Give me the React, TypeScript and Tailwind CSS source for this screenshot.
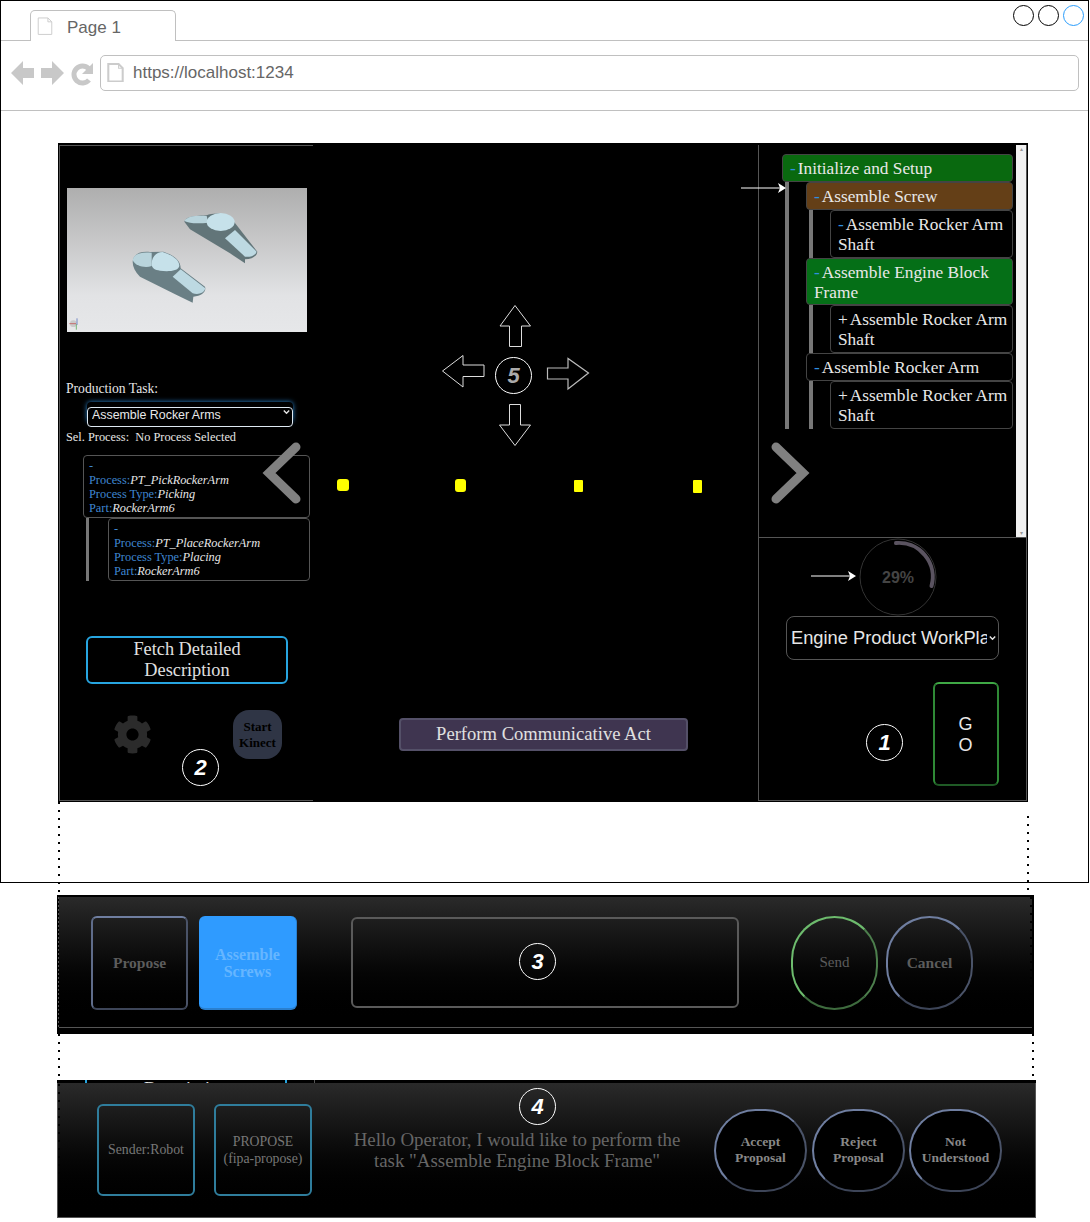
import { FaCog } from "react-icons/fa";

type TreeItem = {
  sign: string;
  label: string;
  bg?: string;
  kids?: TreeItem[];
};

const tree: TreeItem = {
  sign: "-",
  label: "Initialize and Setup",
  bg: "bg-[#09690f]",
  kids: [
    {
      sign: "-",
      label: "Assemble Screw",
      bg: "bg-[#643f17]",
      kids: [{ sign: "-", label: "Assemble Rocker Arm Shaft" }],
    },
    {
      sign: "-",
      label: "Assemble Engine Block Frame",
      bg: "bg-[#056f17]",
      kids: [{ sign: "+", label: "Assemble Rocker Arm Shaft" }],
    },
    {
      sign: "-",
      label: "Assemble Rocker Arm",
      kids: [{ sign: "+", label: "Assemble Rocker Arm Shaft" }],
    },
  ],
};

function TreeNode({ item }: { item: TreeItem }) {
  return (
    <div>
      <div
        className={`rounded-[4px] border border-[#444] pb-[2px] pl-[7px] pr-[2px] pt-[4px] text-[17.3px] leading-[19.9px] text-[#e8e8e8] ${item.bg ?? "bg-black"}`}
      >
        <span className={item.sign === "-" ? "mr-[2px] text-[#2f8fe0]" : "mr-[2px] text-[#e8e8e8]"}>{item.sign}</span>
        {item.label}
      </div>
      {item.kids && (
        <div className="ml-[3px] border-l-[4px] border-[#777] pl-[17px]">
          {item.kids.map((kid) => (
            <TreeNode key={kid.label + kid.sign} item={kid} />
          ))}
        </div>
      )}
    </div>
  );
}

function ProcessCard({ name, type }: { name: string; type: string }) {
  return (
    <div className="h-[63px] rounded-[4px] border border-[#555] pl-[5px] pt-[3px] text-[12.35px] leading-[14px] text-[#3f86d0]">
      <div>-</div>
      <div>
        Process:<i className="text-[#e6e6e6]">{name}</i>
      </div>
      <div>
        Process Type:<i className="text-[#e6e6e6]">{type}</i>
      </div>
      <div>
        Part:<i className="text-[#e6e6e6]">RockerArm6</i>
      </div>
    </div>
  );
}

function Marker({ n, pos, dim }: { n: string; pos: string; dim?: boolean }) {
  return (
    <div
      className={`absolute flex h-[37px] w-[37px] items-center justify-center rounded-full border border-white font-['Liberation_Sans',sans-serif] text-[22px] font-bold italic ${dim ? "text-[#aaa]" : "text-white"} ${pos}`}
    >
      {n}
    </div>
  );
}

function DocIcon({ stroke, width }: { stroke: number; width: number }) {
  return (
    <svg width={width} height={width * 1.15} viewBox="0 0 16 19" fill="none" stroke="#ccc" strokeWidth={stroke}>
      <path d="M1 1h10l4 4v13H1z" />
      <path d="M11 1v4h4" strokeWidth="1" />
    </svg>
  );
}

function Dots({ pos, tint }: { pos: string; tint: string }) {
  return <div className={`absolute w-[2px] ${tint} ${pos}`} />;
}

function PanelButton({ label, cls }: { label: string; cls: string }) {
  return <div className={`flex items-center justify-center text-center ${cls}`}>{label}</div>;
}

function Chevron() {
  return (
    <svg
      className="pointer-events-none absolute right-[3px] top-1/2 -translate-y-1/2"
      width="7"
      height="5"
      viewBox="0 0 7 5"
      fill="none"
      stroke="#e6e6e6"
      strokeWidth="1.4"
    >
      <path d="M0.8 1 3.5 3.8 6.2 1" />
    </svg>
  );
}

function PartPreview() {
  return (
    <svg width="240" height="144" viewBox="51 144 720 432" className="block">
      <defs>
        <linearGradient id="sky" x1="0" y1="0" x2="0" y2="1">
          <stop offset="0" stopColor="#aeaeae" />
          <stop offset="0.75" stopColor="#e2e3e5" />
          <stop offset="1" stopColor="#e6e7e9" />
        </linearGradient>
      </defs>
      <rect x="51" y="144" width="720" height="432" fill="url(#sky)" />
      <path d="M403 245C410 232 420 228 470 226 490 218 530 215 552 245L622 335C620 350 605 358 585 358L585 370 540 340 420 268Z" fill="#627579" />
      <path d="M403 243C412 228 440 226 470 228L475 248C450 250 420 252 403 243Z" fill="#b9d4dc" />
      <ellipse cx="512" cy="246" rx="42" ry="27" fill="#c6e1ea" />
      <path d="M525 295 555 270 620 335C615 348 600 352 585 350Z" fill="#bdd9e2" />
      <path d="M248 365C250 345 265 333 300 336L340 335C370 345 392 360 392 385L465 440C470 455 455 468 430 470L428 488 380 465 270 410C255 395 248 380 248 365Z" fill="#6a7f85" />
      <path d="M248 360C252 342 270 335 305 338L305 378C285 385 255 378 248 360Z" fill="#b9d4dc" />
      <path d="M305 372C305 350 320 336 338 336 365 345 388 358 388 378 385 395 350 395 330 392 315 390 305 385 305 372Z" fill="#c6e1ea" />
      <path d="M368 410 392 388 466 445C462 460 445 465 428 460Z" fill="#bdd9e2" />
      <circle cx="70" cy="551" r="10" fill="#c9c9c9" />
      <path d="M81 535v20" stroke="#3b5bb5" strokeWidth="2" />
      <path d="M58 551h20" stroke="#c04040" strokeWidth="2" />
      <path d="M79 553v16" stroke="#40a040" strokeWidth="2" />
    </svg>
  );
}

function MoveArrows() {
  return (
    <svg width="148" height="142" viewBox="442 305 148 142" fill="none" stroke="#ddd" strokeWidth="1" className="block">
      <path d="M515 305.5 530.5 326H521.5V346.5H509.5V326H500Z" />
      <path d="M442.5 371 463 355.5V365H484V376.5H463V387Z" />
      <path d="M588.5 373 568 358.5V368H547.5V379H568V389Z" strokeWidth="1.2" stroke="#bbb" />
      <path d="M515 445.5 530.5 425H520.5V404.5H509.5V425H499.5Z" />
    </svg>
  );
}

const roundBtn =
  "h-[83px] w-[93px] rounded-full border-[2px] border-b-[#3d4558] border-l-[#6f7ea0] border-r-[#4a5368] border-t-[#6f7ea0] bg-black px-[6px] text-[13.5px] font-bold leading-[16px] text-[#888]";

const blackDots = "bg-[repeating-linear-gradient(to_bottom,#000_0_2px,transparent_2px_8px)]";

export default function App() {
  return (
    <div className="relative h-[1222px] w-[1090px] overflow-hidden bg-white font-['Liberation_Serif',serif]">
      {/* browser frame */}
      <div className="h-[883px] w-[1089px] border border-black">
        <div className="flex h-[40px] items-end border-b border-[#c0c0c0] pl-[29px]">
          <div className="-mb-px flex h-[31px] w-[146px] items-center rounded-t-[5px] border border-b-0 border-[#c0c0c0] bg-white pl-[6px] font-['Liberation_Sans',sans-serif] text-[17px] text-[#666]">
            <DocIcon stroke={1} width={16} />
            <span className="ml-[14px] mt-[4px]">Page 1</span>
          </div>
        </div>
        <div className="flex h-[70px] items-center border-b border-[#c0c0c0] pb-[6px] pl-[10px]">
          <svg width="84" height="26" viewBox="0 0 84 26" fill="#c8c8c8">
            <path d="M0 13 12 1V8H23V18H12V25Z" />
            <path d="M53 13 41 1V8H30V18H41V25Z" />
            <path d="M77.5 8.5A8.5 8.5 0 1 0 78 20" fill="none" stroke="#c8c8c8" strokeWidth="5" />
            <path d="M82 3V14H71Z" />
          </svg>
          <div className="ml-[5px] flex h-[36px] w-[979px] items-center rounded-[5px] border border-[#c0c0c0] pl-[6px] font-['Liberation_Sans',sans-serif] text-[17px] text-[#666]">
            <DocIcon stroke={2} width={17} />
            <span className="ml-[9px]">https://localhost:1234</span>
          </div>
        </div>
        <div className="pl-[57px] pt-[32px]">
          <div className="flex h-[659px] w-[970px] bg-black pb-px pl-px pt-[2px] text-[#e6e6e6]">
            {/* left column */}
            <div className="flex w-[254px] flex-col border-y border-l border-[#555]">
              <div className="ml-[7px] mt-[42px]">
                <PartPreview />
              </div>
              <div className="ml-[6px] mt-[49px] text-[13.6px] leading-[15px]">Production Task:</div>
              <div className="relative ml-[27px] mt-[6px] h-[20px] w-[206px] rounded-[4px] shadow-[0_0_5px_#2a86d0]">
                <select className="h-full w-full appearance-none rounded-[4px] border border-[#dfe9f2] bg-black pb-[4px] pl-[4px] pt-0 font-['Liberation_Sans',sans-serif] text-[12.4px] leading-[14px] text-[#e8e8e8]">
                  <option>Assemble Rocker Arms</option>
                </select>
                <Chevron />
              </div>
              <div className="ml-[6px] mt-[8px] whitespace-pre text-[12.35px] leading-[14px]">Sel. Process:  No Process Selected</div>
              <div className="ml-[23px] mt-[11px] w-[227px]">
                <ProcessCard name="PT_PickRockerArm" type="Picking" />
                <div className="ml-[3px] border-l-[3px] border-[#777] pl-[19px]">
                  <ProcessCard name="PT_PlaceRockerArm" type="Placing" />
                </div>
              </div>
              <button className="ml-[26px] mt-[55px] h-[48px] w-[202px] rounded-[6px] border-2 border-[#27a5e0] px-[30px] text-[18.3px] leading-[21px] text-[#e0e0e0]">
                Fetch Detailed Description
              </button>
              <div className="ml-[53px] mt-[26px] flex items-center gap-[81px]">
                <FaCog size={39} color="#2b2b2b" />
                <div className="flex h-[49px] w-[49px] items-center justify-center rounded-[16px] bg-[#2f3545] text-center text-[13px] font-bold leading-[16px] text-black">
                  Start Kinect
                </div>
              </div>
            </div>

            {/* centre column */}
            <div className="flex w-[445px] flex-col">
              <div className="ml-[129px] mt-[160px]">
                <MoveArrows />
              </div>
              <div className="ml-[24px] mt-[32px] flex items-start">
                <div className="h-[12px] w-[12px] rounded-[3px] bg-[#ffff00]" />
                <div className="ml-[106px] h-[13px] w-[11px] rounded-[3px] bg-[#ffff00]" />
                <div className="ml-[108px] mt-px h-[12px] w-[9px] rounded-[1px] bg-[#ffff00]" />
                <div className="ml-[110px] mt-px h-[13px] w-[9px] rounded-[1px] bg-[#ffff00]" />
              </div>
              <button className="ml-[86px] mt-[225px] h-[33px] w-[289px] rounded-[4px] border-2 border-[#545068] bg-[#3f3550] pb-[2px] text-[18.6px] text-[#e0e0e0]">
                Perform Communicative Act
              </button>
            </div>

            {/* right column */}
            <div className="flex w-[269px] flex-col border-b border-l border-r border-[#555]">
              <div className="flex h-[392px]">
                <div className="flex-1 pl-[23px] pr-[3px] pt-[9px]">
                  <TreeNode item={tree} />
                </div>
                <div className="flex w-[10px] flex-col justify-between bg-[#f1f1f1] text-center text-[6px] leading-[8px] text-[#999]">
                  <span>▴</span>
                  <span>▾</span>
                </div>
              </div>
              <div className="flex flex-1 flex-col border-t border-[#555]">
                <div className="relative ml-[100px] h-[78px] w-[78px]">
                  <svg width="78" height="78" viewBox="0 0 78 78" fill="none" className="block">
                    <circle cx="39" cy="39" r="38" stroke="#333" strokeWidth="1" />
                    <path d="M37 5A34 34 0 0 1 72.5 48" stroke="#5a5360" strokeWidth="4" strokeLinecap="round" />
                  </svg>
                  <span className="absolute inset-0 flex items-center justify-center pt-[1px] font-['Liberation_Sans',sans-serif] text-[16px] font-bold text-[#444]">
                    29%
                  </span>
                </div>
                <div className="relative ml-[27px] h-[44px] w-[213px]">
                  <select className="h-full w-full appearance-none rounded-[8px] border border-[#555] bg-black pl-[4px] pr-[11px] font-['Liberation_Sans',sans-serif] text-[18.3px] text-[#e6e6e6]">
                    <option>Engine Product WorkPlan</option>
                  </select>
                  <Chevron />
                </div>
                <div className="ml-[174px] mt-[22px] flex h-[104px] w-[66px] items-center justify-center rounded-[6px] border-2 border-b-[#1f5a25] border-l-[#2f8a36] border-r-[#2f8a36] border-t-[#3fa845] pr-px pt-[2px] font-['Liberation_Sans',sans-serif] text-[18px] leading-[21px] text-[#e8e8e8]">
                  <span className="w-[15px] break-all text-center">GO</span>
                </div>
              </div>
            </div>
          </div>
        </div>
      </div>

      {/* message composer */}
      <div className="ml-[57px] mt-[12px] flex h-[139px] w-[977px] flex-col border-x-2 border-t-2 border-black bg-black">
        <div className="flex h-[131px] items-center border-b border-[#555] bg-gradient-to-b from-[#2a2a2a] to-black pl-[32px] pt-px">
          <PanelButton
            label="Propose"
            cls="h-[94px] w-[97px] rounded-[6px] border-2 border-b-[#3d4558] border-l-[#5f6c8a] border-r-[#4a5368] border-t-[#6f7ea0] text-[15.5px] font-bold text-[#5c5c5c]"
          />
          <PanelButton
            label="Assemble Screws"
            cls="ml-[11px] h-[94px] w-[98px] rounded-[6px] border-b-2 border-r border-[#2a80d0] bg-[#2f9bff] pt-[3px] text-[16px] font-bold leading-[17px] text-[#66b6ff]"
          />
          <div className="ml-[54px] h-[91px] w-[388px] rounded-[6px] border-2 border-[#5a5a5a]" />
          <PanelButton
            label="Send"
            cls="ml-[52px] h-[94px] w-[87px] rounded-full border-[2px] border-b-[#3e6b3e] border-l-[#6dbb6d] border-r-[#4d7f4d] border-t-[#6dbb6d] text-[15px] text-[#5c5c5c]"
          />
          <PanelButton
            label="Cancel"
            cls="ml-[8px] h-[94px] w-[87px] rounded-full border-[2px] border-b-[#3d4558] border-l-[#6f7ea0] border-r-[#4a5368] border-t-[#6f7ea0] text-[15.5px] font-bold text-[#5c5c5c]"
          />
        </div>
      </div>

      {/* clipped bit of the app behind the received message */}
      <div className="relative ml-[57px] mt-[46px] h-[3px] w-[979px] overflow-hidden bg-black">
        <div className="absolute left-[28px] top-0 h-[3px] w-[202px] border-x-2 border-[#27a5e0] text-center text-[18px] leading-[19px] text-[#e8e8e8]">
          Description
        </div>
        <div className="absolute left-[257px] top-0 h-[3px] w-px bg-[#555]" />
      </div>

      {/* received message */}
      <div className="ml-[57px] h-[135px] w-[979px] border-x border-b border-[#555] bg-gradient-to-b from-[#2a2a2a] to-black">
        <div className="flex h-full items-center pl-[39px]">
          <PanelButton
            label="Sender:Robot"
            cls="h-[92px] w-[98px] rounded-[6px] border-2 border-[#2f7d9c] text-[13.8px] text-[#777]"
          />
          <div className="ml-[19px] flex h-[92px] w-[98px] items-center justify-center rounded-[6px] border-2 border-[#2f7d9c] text-center text-[13.8px] leading-[17px] text-[#777]">
            <span>
              PROPOSE
              <br />
              (fipa-propose)
            </span>
          </div>
          <div className="ml-[29px] w-[352px] text-center text-[18.9px] leading-[21px] text-[#666]">
            Hello Operator, I would like to perform the task "Assemble Engine Block Frame"
          </div>
          <PanelButton label="Accept Proposal" cls={`ml-[21px] ${roundBtn}`} />
          <PanelButton label="Reject Proposal" cls={`ml-[5px] ${roundBtn}`} />
          <PanelButton label="Not Understood" cls={`ml-[4px] ${roundBtn}`} />
        </div>
      </div>

      {/* window buttons */}
      <div className="absolute left-[1013px] top-[5px] flex gap-[4px]">
        <div className="h-[21px] w-[21px] rounded-full border-[1.5px] border-black" />
        <div className="h-[21px] w-[21px] rounded-full border-[1.5px] border-black" />
        <div className="h-[21px] w-[21px] rounded-full border-[1.5px] border-[#2a9dfc]" />
      </div>

      {/* chevrons over the app */}
      <svg className="absolute left-[262px] top-[441px]" width="42" height="64" viewBox="0 0 42 64" fill="none" stroke="#808080" strokeWidth="9" strokeLinecap="round" strokeLinejoin="miter">
        <path d="M34 6 7 32 34 58" />
      </svg>
      <svg className="absolute left-[768px] top-[441px]" width="42" height="64" viewBox="0 0 42 64" fill="none" stroke="#808080" strokeWidth="9" strokeLinecap="round" strokeLinejoin="miter">
        <path d="M8 6 35 32 8 58" />
      </svg>

      {/* note arrows */}
      <svg className="absolute left-[741px] top-[182px]" width="46" height="12" viewBox="0 0 46 12">
        <path d="M0 6H40" stroke="#fff" />
        <path d="M37 1 45 6 37 11 39 6Z" fill="#fff" />
      </svg>
      <svg className="absolute left-[811px] top-[570px]" width="46" height="12" viewBox="0 0 46 12">
        <path d="M0 6H40" stroke="#fff" />
        <path d="M37 1 45 6 37 11 39 6Z" fill="#fff" />
      </svg>

      <Marker n="1" pos="left-[866px] top-[724px]" />
      <Marker n="2" pos="left-[182px] top-[749px]" />
      <Marker n="3" pos="left-[519px] top-[943px]" />
      <Marker n="4" pos="left-[519px] top-[1088px]" />
      <Marker n="5" dim pos="left-[495px] top-[357px]" />

      <Dots tint={blackDots} pos="left-[58px] top-[802px] h-[93px]" />
      <Dots tint={blackDots} pos="left-[1027px] top-[816px] h-[79px]" />
      <Dots tint={blackDots} pos="left-[58px] top-[1034px] h-[46px]" />
      <Dots tint={blackDots} pos="left-[1032px] top-[1034px] h-[46px]" />
      <Dots tint="bg-[repeating-linear-gradient(to_bottom,#555_0_2px,transparent_2px_4px)]" pos="left-[58px] top-[897px] h-[130px] !w-px" />
      <Dots tint={blackDots} pos="left-[58px] top-[1084px] h-[130px]" />
      <Dots tint={blackDots} pos="left-[1030px] top-[897px] h-[130px]" />
    </div>
  );
}
